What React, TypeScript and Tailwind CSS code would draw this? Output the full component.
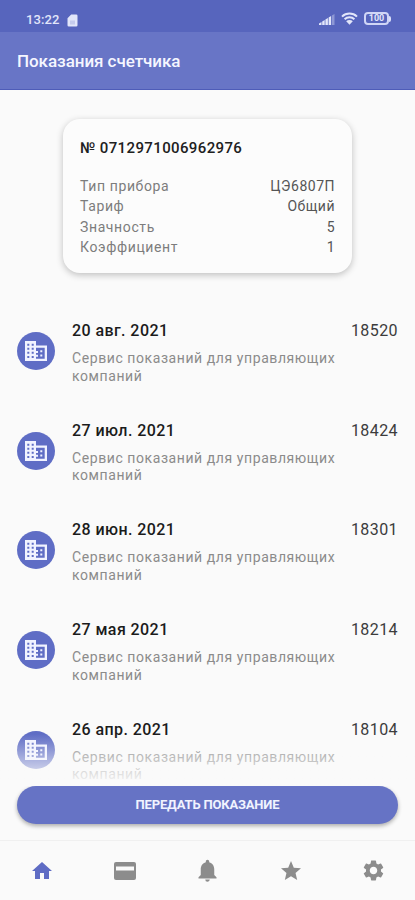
import React from "react";
import { MdHome, MdNotifications, MdStar, MdSettings } from "react-icons/md";

type Reading = { date: string; value: string };

const readings: Reading[] = [
  { date: "20 авг. 2021", value: "18520" },
  { date: "27 июл. 2021", value: "18424" },
  { date: "28 июн. 2021", value: "18301" },
  { date: "27 мая 2021", value: "18214" },
  { date: "26 апр. 2021", value: "18104" },
];

const details = [
  ["Тип прибора", "ЦЭ6807П"],
  ["Тариф", "Общий"],
  ["Значность", "5"],
  ["Коэффициент", "1"],
];

function StatusBar() {
  return (
    <div className="flex h-8 items-start justify-between bg-[#5765bd] pr-[24px] pl-[26px] pt-[12px] text-[#e2e6fa]">
      <div className="flex items-center gap-[8px]">
        <span className="text-[13px] leading-[16px] font-medium tracking-[0.1px]">13:22</span>
        <svg width="11" height="13" viewBox="0 0 11 13">
          <path d="M4.2.5H9.2a1.3 1.3 0 0 1 1.3 1.3v9.4a1.3 1.3 0 0 1-1.3 1.3H1.8A1.3 1.3 0 0 1 .5 11.2V4.2z" fill="currentColor" />
          <path d="M3 6.5h5v4H3z" fill="#c5cbed" />
        </svg>
      </div>
      <div className="flex items-center gap-[6px]">
        <svg width="16" height="12" viewBox="0 0 16 12" fill="currentColor">
          <path d="M0 12V10.500l2.500-1.500v3zM3.200 12V8.500l2.500-1.500v5zM6.400 12V6.500L8.900 5v7zM9.600 12V4.500L12.100 3v9z" />
          <path d="M12.900 12V2.500L15.500 1v11z" opacity="0.4" />
        </svg>
        <svg width="17" height="13" viewBox="0 0 17 13" fill="none" stroke="currentColor" strokeWidth="2">
          <path d="M1 4.600a10.800 10.800 0 0 1 15 0M3.600 7.300a7 7 0 0 1 9.800 0" />
          <path d="M5.200 9.300a4.700 4.700 0 0 1 6.600 0L8.500 12.800z" fill="currentColor" stroke="none" />
        </svg>
        <div className="flex items-center">
          <div className="flex h-[13px] w-[25px] items-center justify-center rounded-[4px] border-2 border-[#d0d6f6] text-[9px] leading-none font-bold">100</div>
          <div className="h-[6px] w-[2px] rounded-r-full bg-[#d9defa]" />
        </div>
      </div>
    </div>
  );
}

function BuildingIcon() {
  return (
    <div className="mt-[11px] flex size-[38px] shrink-0 items-center justify-center rounded-full bg-[#5f6dc5]">
      <svg width="22" height="20" viewBox="0 0 22 20">
        <path d="M0 0h11v4.500h11V20H0z" fill="#f1f3ff" />
        <path d="M2.300 2.800h2v2h-2zM6.700 2.800h2v2h-2zM2.300 6.800h2v2h-2zM6.700 6.800h2v2h-2zM2.300 10.800h2v2h-2zM6.700 10.800h2v2h-2zM2.300 14.900h2v2h-2zM6.700 14.900h2v2h-2z" fill="#5f6dc5" />
        <path d="M11 6.700h8.700v11H11v-2h2v-2h-2v-1.800h2v-2h-2zM15.300 9.200v2h2v-2zM15.300 13.400v2h2v-2z" fill="#5f6dc5" fillRule="evenodd" />
      </svg>
    </div>
  );
}

function ReadingRow({ date, value }: Reading) {
  return (
    <div className="flex h-[99.700px] shrink-0 items-start pr-[17px] pl-[17px]">
      <BuildingIcon />
      <div className="ml-[17px] min-w-0 flex-1">
        <div className="flex justify-between text-[16px] leading-[20px] tracking-[0.42px]">
          <span className="font-medium text-[#1b1b1b]">{date}</span>
          <span className="text-[#3c3c3c]">{value}</span>
        </div>
        <p className="mt-[9px] w-[275px] text-[14px] leading-[17.500px] tracking-[0.58px] text-[#8b8b8b]">
          Сервис показаний для управляющих компаний
        </p>
      </div>
    </div>
  );
}

export default function App() {
  return (
    <div className="flex h-[900px] w-[415px] flex-col overflow-hidden bg-[#fafafa] font-['Roboto',sans-serif]">
      <StatusBar />
      <header className="flex h-[58px] shrink-0 items-center border-b border-[#4e5cb8] bg-[#6875c6] pl-[17px]">
        <h1 className="text-[17px] leading-6 font-medium tracking-[-0.06px] text-[#f5f6ff]">Показания счетчика</h1>
      </header>
      <section className="mx-[63px] mt-[29px] h-[154px] shrink-0 rounded-[17px] bg-[#fcfcfc] px-[17px] pt-[19px] shadow-[0_2px_7px_rgba(0,0,0,0.24)]">
        <h2 className="text-[15px] leading-[20px] font-medium tracking-[0.38px] text-[#202020]">№ 0712971006962976</h2>
        <dl className="mt-[18px] text-[14px] leading-[20.300px] tracking-[0.62px]">
          {details.map(([label, value]) => (
            <div key={label} className="flex justify-between">
              <dt className="text-[#7d7d7d]">{label}</dt>
              <dd className="tracking-[0.5px] text-[#555555]">{value}</dd>
            </div>
          ))}
        </dl>
      </section>
      <div className="relative mt-[48px] flex h-[465px] shrink-0 flex-col overflow-hidden">
        {readings.map((r) => (
          <ReadingRow key={r.date} {...r} />
        ))}
        <div className="absolute inset-x-0 bottom-0 h-[52px] bg-linear-to-b from-[#fafafa]/0 to-[#fafafa]" />
      </div>
      <button className="mx-[17px] flex h-[38px] shrink-0 items-center justify-center rounded-full bg-[#6673c5] text-[13px] font-bold tracking-[-0.18px] text-[#f1f3ff] shadow-[0_2px_4px_rgba(0,0,0,0.32)]">
        ПЕРЕДАТЬ ПОКАЗАНИЕ
      </button>
      <nav className="mt-[16px] grid flex-1 grid-cols-5 items-center justify-items-center border-t border-[#f0f0f0] text-[#8c8c8c]">
        <MdHome size={24} className="text-[#5f6cc4]" />
        <svg width="22" height="18" viewBox="0 0 22 18">
          <rect width="22" height="18" rx="2" fill="currentColor" />
          <path d="M2 4.500h18v4H2z" fill="#fafafa" />
        </svg>
        <MdNotifications size={27} />
        <MdStar size={24} />
        <MdSettings size={25} />
      </nav>
    </div>
  );
}
